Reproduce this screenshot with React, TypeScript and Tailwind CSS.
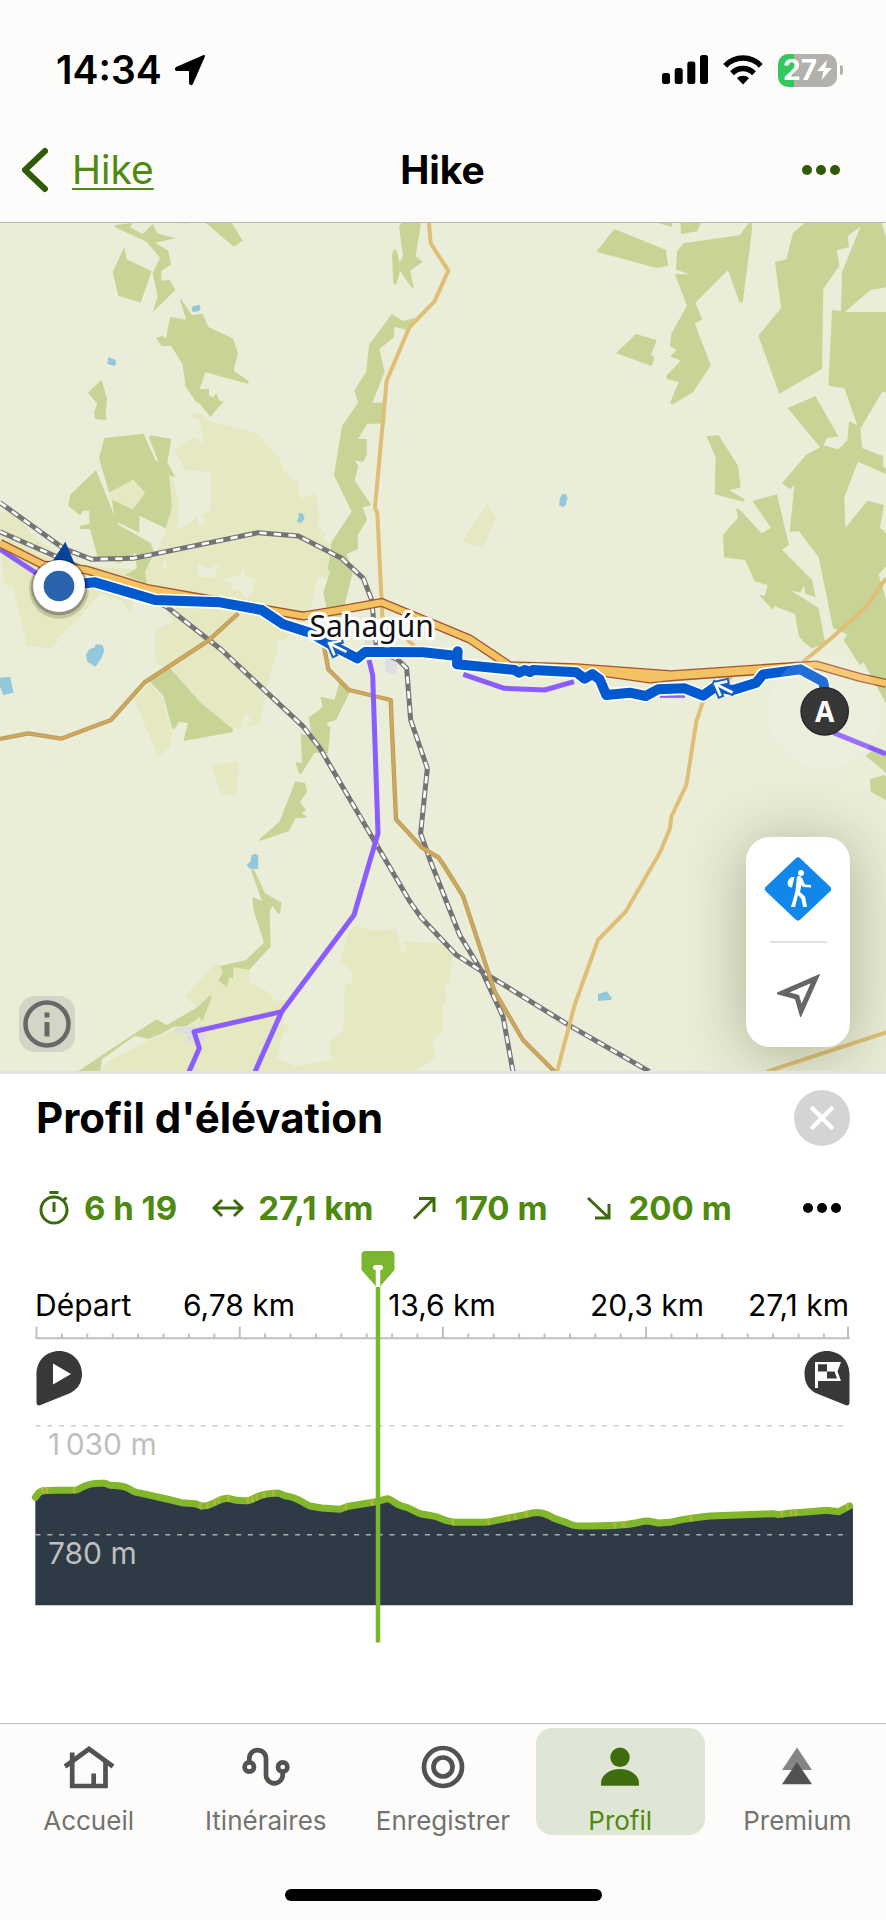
import type { ReactNode } from 'react';

const WOOD = '#c8d496';
const FARM = '#e5e8c0';
const WATER = '#93c8dc';
const TOWN = '#dddee0';

interface Shape {
  fill: string;
  d: string;
}

// Land cover polygons, split in four tiles of the map
const tiles: { x: number; y: number; shapes: Shape[] }[] = [
  {
    x: 0,
    y: 0,
    shapes: [
      { fill: FARM, d: 'M565 585L600 578L632 605L768 638L838 710L850 750L880 783L892 781L900 838L948 820L957 890L950 925L970 918L960 940L975 940L970 958L1025 995L1080 1060L1050 1075L985 1075L952 1072L930 1180L850 1262H465V1232L520 1205L500 1165L400 1120L395 1180L360 1140L300 1120L240 1190L170 1260L150 1285L80 1275L40 1100L12 1090L5 1010L0 980V877L40 880L75 915L100 950L200 1020L290 1040L440 1050L470 1000L500 925L515 850L505 760L515 770L538 850L530 933L590 892L600 920L618 905L603 885L632 870V755L555 750L523 690L585 652L612 680L600 600Z' },
      { fill: '#eaedd7', d: 'M592 1028L628 1045L660 1030L640 1075L595 1070ZM660 1080L718 1065L735 1038L732 1070L772 1078L755 1095L762 1110L740 1135L720 1110L695 1115L695 1090ZM485 1045L497 1010L500 1048Z' },
      { fill: WOOD, d: 'M345 15L398 9L390 22L428 42L458 12L472 40L527 55L465 68L505 92L513 134L484 152V182L509 179L526 210L459 276L473 227L458 160L480 113L440 65L345 22ZM373 82L380 118L455 154L422 248L355 227L338 155ZM548 9L560 9L550 11ZM618 9H695L728 62L701 80ZM542 236L576 285L607 281L626 322L698 355L714 398L701 452L747 484L743 491L616 457L599 507H627V527L640 532L649 519L658 543L671 544L631 591L597 548H590L555 497L556 490L547 432L514 378H485L468 355L486 347L498 355L510 291L559 299L540 240ZM304 479L321 535L317 582L320 601L285 597L282 578L292 552L264 518Z' },
      { fill: WOOD, d: 'M313 654L431 641L466 720L476 725L447 655L450 646L514 656L502 728L527 773L507 765L516 862L497 925L418 887V938L345 902L335 838L398 868L435 818L400 780L327 818L297 714ZM288 750L343 887L356 915L452 968L463 1000L435 1055L440 1090L375 1065L410 1045L407 1000L360 1030L293 1010L270 928L239 926V918L268 911V872L250 872L240 886L205 858L210 825Z' },
      { fill: WOOD, d: 'M1197 20L1205 9H1263L1247 108L1268 126L1230 152L1241 200L1236 205L1200 152L1189 195L1180 192L1176 105L1182 88L1190 92L1199 128L1209 107ZM1175 283L1210 303L1247 293L1222 330L1183 320L1182 352L1138 387L1154 455L1117 548H1156V610L1101 612L1074 657H1100V705L1090 725L1064 722L1075 738L1064 782L1114 855L1088 862L1101 900L1073 945L1074 988L1040 1002L1057 1060L1035 1150L1030 1190H985L970 1118L990 1055L983 1048L990 1005L995 965L1055 875L1002 766L1026 618L1074 548L1063 511L1098 457L1107 375Z' },
      { fill: WATER, d: 'M578 259L598 254L602 266L596 274L578 276L575 266ZM325 411L347 420L348 432L343 438L322 431ZM895 880H908L914 894L904 910L890 904L897 892ZM268 1288L285 1282L287 1273L307 1275L313 1290L306 1312L287 1340L262 1325L258 1304Z' },
      { fill: TOWN, d: 'M1100 1215H1190V1295H1092Z' },
    ],
  },
  {
    x: 1329,
    y: 0,
    shapes: [
      { fill: WOOD, d: 'M514 27L668 89L676 137L641 144L460 95ZM645 9H687V21ZM712 9H774L762 34L714 42ZM918 9H928L926 40L899 248H890L855 150L757 248L778 299L755 310L803 436L750 517L687 554L682 547L707 486L673 478L669 469L713 422L681 408L701 391L681 378L685 341L732 257L696 163H741L699 149L702 94L722 70L889 46ZM579 342L641 360L624 405L635 410L626 438L519 400Z' },
      { fill: WOOD, d: 'M1085 9H1260L1252 20L1214 47L1218 81L1182 91L1189 138L1141 206L1137 447L1009 521L946 347L1014 264L996 126L1030 118L1050 38ZM1257 9H1315L1329 50V202L1282 210L1206 276H1329V517H1317L1252 626L1258 685L1320 708V740L1329 745V762L1245 725L1204 831L1207 924L1273 842L1323 855L1311 923L1329 940V1040L1307 1063L1329 1140V1260V1450L1262 1327L1250 1335L1201 1259L1214 1245L1186 1230L1170 1224L1127 1012L1068 934L1040 936L1054 796L1041 808L1017 790L1089 705L1131 682L1034 564L1117 528L1187 650L1152 654L1141 676L1186 688L1213 660L1218 604L1243 616L1204 504L1156 497L1167 270L1194 273L1197 156Z' },
      { fill: WOOD, d: 'M790 648L827 646L885 737L893 802L859 811L905 838L903 845L815 823L818 712ZM879 866H888L956 940L984 923L928 843L1002 823L1038 975L1017 989L1108 1081L1118 1132L1086 1121L1084 1095L1072 1118L1043 1111L1126 1163L1147 1270L1107 1285L1068 1251L1056 1182L994 1158L990 1170L952 1130V1124L965 1128L974 1095L935 1084L907 1021L843 1012L840 944L885 893Z' },
      { fill: FARM, d: 'M134 852L159 895L120 982L57 965Z' },
      { fill: WATER, d: 'M357 822L369 823L374 834L368 855L361 861L348 856L351 833Z' },
    ],
  },
  {
    x: 0,
    y: 1260,
    shapes: [
      { fill: FARM, d: 'M80 0H178L147 26L80 12ZM465 0H830L833 32L800 140L780 250L740 260L752 237L735 218L722 268L700 265L560 160L510 85L467 70ZM403 180L450 128L490 180L515 285L511 318L475 352ZM632 374L717 364L709 464L666 466ZM645 972L750 990L745 1025L795 1050L830 1085L860 1080L850 1150L870 1160L845 1190L830 1255L890 1280L1000 1260L988 1230L990 1205L1030 1175L1035 1030L1055 1035L1058 995L1020 965L1045 875L1065 858L1120 872L1188 868L1206 945L1222 925L1206 905L1329 912V1293H300L330 1262L470 1190L520 1170L595 1100L553 1072Z' },
      { fill: '#eaedd7', d: 'M1329 1172L1296 1205L1306 1250L1246 1293H1329Z' },
      { fill: WOOD, d: 'M510 85L602 188L700 268L697 277L550 303L564 250L538 245L524 266H517L490 168L448 123ZM1018 128L1050 155L1008 240L978 249L991 263L984 340L944 338L904 401L896 400L886 367L906 368L902 282L936 290L926 233L968 201L961 170L1003 180ZM886 424L916 430L921 456L900 485L918 510L905 520L918 527V533L886 535L867 573L780 603V596L838 545ZM752 688H762L795 760L845 788L840 820L834 821L818 797L809 812L812 920L748 989L700 982L699 1015L688 1012L680 1042L655 1020L668 1000L661 978L738 960L792 908L761 812L757 772L786 782ZM628 1068L636 1070L607 1144L598 1132L560 1158L520 1160L490 1178L447 1197L405 1187L306 1258L300 1293H235L405 1180L470 1138L500 1155L590 1103Z' },
      { fill: WATER, d: 'M0 113L30 110L41 158L10 165L0 140ZM765 641L775 646L774 687L750 686L740 676L752 664L755 646Z' },
      { fill: TOWN, d: 'M1155 50H1195L1188 103L1155 95ZM515 1175L540 1163L615 1155L620 1180L605 1210L562 1205V1182Z' },
    ],
  },
  {
    x: 1329,
    y: 1260,
    shapes: [
      { fill: FARM, d: 'M0 910L28 945L20 1025L5 1035L12 1090L0 1095Z' },
      { fill: WOOD, d: 'M1075 0H1160L1107 25ZM1268 348L1290 330L1329 345V398ZM1281 418L1325 405L1329 410V480L1283 455Z' },
      { fill: WATER, d: 'M465 1062L491 1054L507 1075L504 1080L465 1083Z' },
    ],
  },
];

const lightRoads = [
  'M1287 9L1292 70L1345 152L1303 245L1228 322L1160 482L1125 862L1132 880L1147 1190L1243 1278',
  'M2194 1370L2109 1445L2089 1505L2059 1695L2014 1790L2010 1825L1981 1895L1877 2075L1794 2160L1724 2355L1671 2555',
  'M2658 1075L2599 1160L2499 1250L2410 1325',
  'M2300 2555L2658 2437',
];

const darkRoads = [
  'M0 1557L85 1540L183 1556L333 1500L433 1388L625 1262L715 1180',
  'M965 1240L985 1348L1047 1410L1172 1440L1188 1798L1265 1882L1315 1912L1329 1932L1389 2028L1484 2315L1569 2460L1664 2555',
];

const railways = [
  'M0 848L190 985L275 1018L400 1015L775 938L895 948L1025 1015L1090 1075L1115 1140L1130 1290L1195 1320L1220 1345L1232 1500L1282 1645L1262 1840L1290 1920L1379 2145L1449 2260L1509 2390L1539 2555',
  'M0 935L170 1010L500 1160L665 1290L910 1520L960 1585L1230 2045L1265 2095L1369 2205L1439 2250L1714 2420L1949 2555',
];

const trails = [
  'M0 988L110 1060',
  'M1107 1320L1118 1365L1134 1840L1062 2085L845 2375L582 2435L598 2485L567 2555',
  'M845 2375L765 2555',
  'M1390 1363L1513 1405L1634 1410L1722 1385',
  'M1980 1426H2055',
  'M2500 1538L2658 1602',
];

const highways = [
  'M1770 1352L1950 1377L2020 1370L2270 1352',
  'M0 970L130 1035L260 1050L440 1105L620 1137L780 1165L910 1188L1020 1170L1145 1147L1409 1257L1529 1337L1729 1343L2014 1364L2449 1335L2579 1372L2658 1390',
];

const route =
  'M177 1098L285 1087L465 1140L660 1147L785 1170L850 1213L930 1238L1000 1278L1072 1315L1095 1296L1150 1296L1270 1297L1372 1308L1373 1294L1371 1333L1544 1350L1557 1358L1574 1350L1590 1356L1599 1350L1729 1357L1754 1376L1777 1362L1799 1378L1819 1425L1889 1418L1937 1428L1974 1408L2054 1405L2109 1427L2144 1402L2199 1410L2269 1388L2289 1363L2401 1348L2469 1385L2477 1420';

const arrows = [
  { x: 988, y: 1270 },
  { x: 2146, y: 1392 },
];

const elevation =
  'M106 292L115 280C125 268 140 272 230 270C275 245 295 250 315 250L330 256C360 256 370 258 385 265C400 275 410 279 425 280L500 297L545 308L585 311L605 318C640 320 650 295 685 295C700 300 715 304 745 302C765 298 770 280 835 279L855 287C900 293 905 309 930 318L965 324L1020 328L1045 319L1120 307L1163 296C1180 300 1185 312 1205 318C1240 325 1240 337 1265 342L1310 350L1340 362L1365 367L1450 367L1470 365L1530 353L1580 343C1620 330 1640 343 1665 356L1700 368C1725 380 1730 378 1765 378C1870 378 1890 373 1930 364L1945 363L1975 369L2010 367C2060 353 2070 356 2130 348L2320 341L2335 344L2365 340L2430 335L2480 331L2517 335L2549 318';

const steepBits = [
  [132, 271], [145, 271], [226, 270], [605, 318], [627, 316], [648, 306], [660, 300],
  [690, 295], [748, 301], [762, 298], [775, 292], [796, 284], [824, 280], [1042, 320],
  [1120, 307], [1363, 367], [1470, 365], [1530, 354], [1550, 350], [1584, 342], [1848, 375],
  [1876, 373], [2078, 354], [2350, 342], [2378, 339], [2392, 338], [2546, 319],
];

const distances: { x: number; label: string; anchor: 'start' | 'middle' | 'end' }[] = [
  { x: 35, label: 'Départ', anchor: 'start' },
  { x: 239, label: '6,78 km', anchor: 'middle' },
  { x: 442, label: '13,6 km', anchor: 'middle' },
  { x: 647, label: '20,3 km', anchor: 'middle' },
  { x: 849, label: '27,1 km', anchor: 'end' },
];

function StatusBar() {
  return (
    <div className="flex h-[120px] items-center justify-between pt-5 pr-[43px] pl-14">
      <div className="flex items-center gap-3">
        <span className="text-[39px] leading-12 font-semibold">14:34</span>
        <svg viewBox="0 0 32 32" className="h-8 w-8" aria-hidden="true">
          <path
            d="M30 2L18 29.500Q16.500 31 16 29V17.500Q16 16 14.500 16H3Q1 15.500 2.500 14Z"
            fill="black"
            stroke="black"
            strokeWidth="2"
            strokeLinejoin="round"
          />
        </svg>
      </div>
      <div className="flex items-center gap-[15px]">
        <svg viewBox="0 0 46 30" className="h-[30px] w-[46px]" aria-hidden="true">
          <rect x="0" y="18" width="8" height="11" rx="2.500" />
          <rect x="12.700" y="13" width="8" height="16" rx="2.500" />
          <rect x="25.300" y="6.500" width="8" height="22.500" rx="2.500" />
          <rect x="38" y="0" width="8" height="29" rx="2.500" />
        </svg>
        <svg viewBox="0 0 40 30" className="h-[30px] w-10" aria-hidden="true">
          <path d="M2.200 10.800C12 .500 28 .500 37.800 10.800" fill="none" stroke="black" strokeWidth="5.500" />
          <path d="M9 18.200C15.500 12 24.500 12 31 18.200" fill="none" stroke="black" strokeWidth="5.500" />
          <path d="M20 29.500L14 23.200C17.500 20 22.500 20 26 23.200Z" />
        </svg>
        <div className="flex items-center gap-[3px]">
          <div className="flex h-[33px] w-[59px] items-center justify-center rounded-[10px] bg-linear-to-r from-[#34c759] from-27% to-[#b2b1ae] to-27%">
            <span className="text-[28px] leading-8 font-bold text-white">27</span>
            <svg viewBox="0 0 15 20" className="h-5 w-[15px]" aria-hidden="true">
              <path d="M10 0L0 11H6.500L4.500 20L15 8H8.500Z" fill="white" />
            </svg>
          </div>
          <span className="h-[10px] w-[3px] rounded-r-full bg-[#b2b1ae]" />
        </div>
      </div>
    </div>
  );
}

function HikeMap() {
  return (
    <svg viewBox="0 9 2658 2544" className="block h-auto w-full bg-[#eaedd7]" role="img" aria-label="Sahagún">
      {tiles.map((tile) => (
        <g key={`${tile.x}-${tile.y}`} transform={`translate(${tile.x} ${tile.y})`}>
          {tile.shapes.map((shape) => (
            <path key={shape.d} d={shape.d} fill={shape.fill} />
          ))}
        </g>
      ))}
      <path d="M327 818L400 780L435 818L398 868L335 838Z" fill={FARM} />

      <g fill="none" strokeLinejoin="round">
        {railways.map((d) => (
          <g key={d}>
            <path d={d} stroke="#747474" strokeWidth="15" />
            <path d={d} stroke="white" strokeWidth="8" strokeDasharray="22 22" />
          </g>
        ))}
        {lightRoads.map((d) => (
          <path key={d} d={d} stroke="#dfbf76" strokeWidth="12" />
        ))}
        {darkRoads.map((d) => (
          <g key={d}>
            <path d={d} stroke="#b59a5e" strokeWidth="13" />
            <path d={d} stroke="#d1a85a" strokeWidth="8" />
          </g>
        ))}
        {trails.map((d) => (
          <path key={d} d={d} stroke="#8b5cff" strokeWidth="15" />
        ))}
        {highways.map((d) => (
          <path key={d} d={d} stroke="#a4552c" strokeWidth="27" />
        ))}
        {highways.map((d) => (
          <path key={d} d={d} stroke="#f3c263" strokeWidth="19" />
        ))}
        <path d={route} stroke="white" strokeWidth="40" />
        <path d={route} stroke="#0059cf" strokeWidth="30" />
        {arrows.map((arrow) => (
          <g key={arrow.x} transform={`translate(${arrow.x} ${arrow.y})`} strokeLinecap="square">
            <path d="M0 0L48 24M32 -7L0 0L14 32" stroke="#1461c4" strokeWidth="20" />
            <path d="M0 0L48 24M32 -7L0 0L14 32" stroke="white" strokeWidth="8" strokeLinejoin="miter" />
          </g>
        ))}
      </g>

      <text
        x="1115"
        y="1252"
        textAnchor="middle"
        className="fill-[#111] stroke-white font-['Noto_Sans',sans-serif] text-[90px]"
        strokeWidth="20"
        strokeLinejoin="round"
        paintOrder="stroke"
      >
        Sahagún
      </text>

      <path d="M196 965L152 1032H224Z" fill="#06449b" />
      <circle cx="177" cy="1106" r="90" fill="black" opacity="0.150" />
      <circle cx="177" cy="1102" r="84" fill="black" opacity="0.250" />
      <circle cx="177" cy="1098" r="78" fill="white" />
      <circle cx="177" cy="1098" r="46" fill="#2962ad" />

      <circle cx="2474" cy="1474" r="170" fill="white" opacity="0.130" />
      <circle cx="2474" cy="1474" r="71" fill="#373737" stroke="#2a202c" strokeWidth="4" />
      <text
        x="2474"
        y="1505"
        textAnchor="middle"
        className="fill-white font-['Noto_Sans',sans-serif] text-[84px] font-bold"
      >
        A
      </text>
    </svg>
  );
}

function MapControls() {
  return (
    <div className="absolute right-9 bottom-6 flex w-[104px] flex-col items-center rounded-3xl bg-white shadow-[0_6px_60px_rgba(60,60,20,0.35)]">
      <button type="button" aria-label="Type de carte" className="flex h-[104px] w-full items-center justify-center">
        <svg viewBox="-34 -32 68 64" className="h-16 w-[68px]" aria-hidden="true">
          <path d="M0 -28L29.500 0L0 28L-29.500 0Z" fill="#1187ea" stroke="#1187ea" strokeWidth="7" strokeLinejoin="round" />
          <circle cx="3" cy="-16" r="3" fill="white" />
          <path
            d="M-1 -12.500L2 -13L4 -11L7 -4.500L13 -4V-1.500L5 -2L3.500 -4L2 3L7 7.500L9 18H5L3.500 10L0 6L-3 18H-7L-2.500 2Z"
            fill="white"
          />
          <path d="M-3.500 -12L-6 -1.500C-10 -1.500 -11 -5 -10 -8C-9 -11 -6.500 -12.500 -3.500 -12Z" fill="white" />
        </svg>
      </button>
      <span className="h-[2px] w-[57px] bg-[#e0e0e0]" />
      <button type="button" aria-label="Ma position" className="flex h-[104px] w-full items-center justify-center">
        <svg viewBox="0 0 43 43" className="h-[43px] w-[43px]" aria-hidden="true">
          <path d="M38.500 4.500L5 19L20 23L24 37Z" fill="none" stroke="#666" strokeWidth="5" />
        </svg>
      </button>
    </div>
  );
}

function Dots({ className }: { className: string }) {
  return (
    <svg viewBox="0 0 40 12" className={className} aria-hidden="true">
      <circle cx="6" cy="6" r="5" />
      <circle cx="20" cy="6" r="5" />
      <circle cx="34" cy="6" r="5" />
    </svg>
  );
}

function Stat({ label, children }: { label: string; children: ReactNode }) {
  return (
    <div className="flex items-center gap-3">
      <svg viewBox="-18 -18 36 36" className="h-9 w-9 fill-none stroke-[#3d6b0c]" strokeWidth="3" aria-hidden="true">
        {children}
      </svg>
      <span className="text-[33px] leading-10 font-bold text-[#4f8a10]">{label}</span>
    </div>
  );
}

function ElevationChart() {
  const ticks = Array.from({ length: 33 }, (_, i) => i);

  return (
    <svg
      viewBox="0 0 886 410"
      className="block h-auto w-full font-[Inter,sans-serif] text-[30px]"
      role="img"
      aria-label="Profil d'élévation"
    >
      {distances.map((distance) => (
        <text key={distance.label} x={distance.x} y="76" textAnchor={distance.anchor}>
          {distance.label}
        </text>
      ))}
      <path d="M35.500 98.300H850" stroke="#bfbfbf" strokeWidth="2" />
      {ticks.map((i) => {
        const x = Math.min(36.5 + i * 25.4, 848);
        return (
          <path key={i} d={`M${x} ${i % 8 === 0 ? 86.7 : 93.5}V98`} stroke="#bfbfbf" strokeWidth="2" />
        );
      })}

      <path
        d="M36.500 134C36.500 120 47 111 59 111C72 111 82 121 82 134C82 144 76 151 68 154L40 165.300Q36.500 166 36.500 163Z"
        fill="#383838"
      />
      <path d="M53 123.500V144.500L71 134Z" fill="white" />
      <path
        d="M849.500 134C849.500 120 839 111 827 111C814 111 804.500 121 804.500 134C804.500 144 810 151 818 154L846 165.300Q849.500 166 849.500 163Z"
        fill="#383838"
      />
      <path d="M815 122H841L837.500 131.500L841 141H818V148H815Z" fill="white" />
      <path d="M818 124.300H827V131.500H818ZM827 131.500H834.500L837 138.500H827Z" fill="#383838" />

      <path d="M35.500 185.700H845" stroke="#ccc" strokeWidth="1.500" strokeDasharray="5 6.800" />
      <g transform="translate(0 160) scale(0.3333)">
        <path d={`${elevation}L2559 325V616H106Z`} fill="#2e3a46" />
        <path d={elevation} fill="none" stroke="#82b72c" strokeWidth="21" strokeLinecap="round" strokeLinejoin="round" />
        {steepBits.map(([x, y]) => (
          <path
            key={x}
            d={`M${x - 2} ${y - 9}Q${x - 9} ${y} ${x - 1} ${y + 9}`}
            fill="none"
            stroke="#b0b83c"
            strokeWidth="7"
          />
        ))}
      </g>
      <path d="M35.500 294.700H845" stroke="#a9adb0" strokeWidth="1.500" strokeDasharray="5 6.800" />
      <text x="48" y="215" className="fill-[#bfbfbf]">
        {'1\u2009030 m'}
      </text>
      <text x="48" y="324" className="fill-[#bfbfbf]">
        780 m
      </text>

      <path d="M378 40V402.500" stroke="#7ab72e" strokeWidth="4.500" />
      <path d="M365.500 11H390.500Q394.500 11 394.500 15V30L380 46.500H376L361.500 30V15Q361.500 11 365.500 11Z" fill="#7ab72e" />
      <path d="M378 27V47" stroke="white" strokeWidth="4.500" />
      <path d="M375.500 27.500H380.500" stroke="white" strokeWidth="5" strokeLinecap="round" />
    </svg>
  );
}

const tabs: { label: string; active?: boolean; icon: ReactNode }[] = [
  {
    label: 'Accueil',
    icon: (
      <g fill="none" stroke="#525250" strokeWidth="4.700">
        <path d="M-24 -.500L0 -18L24 -.500" />
        <path d="M-16.800 -14.500V19H16.500V-5M4.700 6.500V19" />
      </g>
    ),
  },
  {
    label: 'Itinéraires',
    icon: (
      <g fill="none" stroke="#525250" strokeWidth="4.700">
        <circle cx="-16.700" cy="0" r="4.700" />
        <circle cx="16.700" cy="0" r="4.700" />
        <path d="M-16.700 -5V-8.600A8.350 8.350 0 0 1 0 -8.600V8A8.350 8.350 0 0 0 16.700 8V5" />
      </g>
    ),
  },
  {
    label: 'Enregistrer',
    icon: (
      <g fill="none" stroke="#525250" strokeWidth="4.700">
        <circle r="19" />
        <circle r="9.500" />
      </g>
    ),
  },
  {
    label: 'Profil',
    active: true,
    icon: (
      <g fill="#3f6d0d">
        <circle cy="-9.700" r="9.700" />
        <path d="M-19 18.700V16C-19 8 -10 2 0 2S19 8 19 16V18.700Z" />
      </g>
    ),
  },
  {
    label: 'Premium',
    icon: (
      <g>
        <path d="M0 -19.500L15 3H-15Z" fill="#858583" />
        <path d="M0 -5L15 17.300H-15Z" fill="#525250" />
      </g>
    ),
  },
];

function TabBar() {
  return (
    <nav className="border-t border-[#bdbdbb] bg-[#fdfcfa] pt-1 pb-[19px]">
      <div className="grid grid-cols-5">
        {tabs.map((tab) => (
          <a
            key={tab.label}
            href="#"
            className={`mx-1 flex h-[107px] flex-col items-center rounded-2xl pt-[17px] ${
              tab.active ? 'bg-[#dfe6d6] text-[#4f8a10]' : 'text-[#737371]'
            }`}
          >
            <svg viewBox="-26 -22 52 44" className="h-11 w-[52px]" aria-hidden="true">
              {tab.icon}
            </svg>
            <span className="mt-[18px] text-[26px] leading-7">{tab.label}</span>
          </a>
        ))}
      </div>
      <div className="mx-auto mt-[54px] h-3 w-[317px] rounded-full bg-black" />
    </nav>
  );
}

export default function App() {
  return (
    <div className="flex min-h-screen flex-col bg-white font-[Inter,sans-serif] text-black">
      <header className="border-b border-[#b9b9b4] bg-[#fdfcfa]">
        <StatusBar />
        <div className="grid h-[102px] grid-cols-3 items-center pr-[45px] pb-[2px] pl-5">
          <a href="#" className="flex items-center gap-6 text-[39px] leading-12 text-[#4f8a10]">
            <svg viewBox="0 0 28 46" className="h-[46px] w-7" aria-hidden="true">
              <path
                d="M25 4L5 23L25 42"
                fill="none"
                stroke="#2f5a08"
                strokeWidth="6"
                strokeLinecap="round"
                strokeLinejoin="round"
              />
            </svg>
            <span className="underline decoration-2 underline-offset-4">Hike</span>
          </a>
          <h1 className="pl-6 text-center text-[39px] leading-12 font-bold">Hike</h1>
          <button type="button" aria-label="Plus d'options" className="justify-self-end">
            <Dots className="h-3 w-10 fill-[#2f5a08]" />
          </button>
        </div>
      </header>

      <div className="relative overflow-hidden border-b-3 border-[#e3e3e6]">
        <HikeMap />
        <button
          type="button"
          aria-label="Informations"
          className="absolute bottom-[19px] left-[19px] flex h-14 w-14 items-center justify-center rounded-2xl bg-[#d3d6c6]"
        >
          <svg viewBox="0 0 48 48" className="h-12 w-12" aria-hidden="true">
            <circle cx="24" cy="24" r="21.500" fill="none" stroke="#686868" strokeWidth="4.500" />
            <path d="M24 12.500V17.500M24 22V36.500" stroke="#686868" strokeWidth="5" />
          </svg>
        </button>
        <MapControls />
      </div>

      <section className="grow pt-4 pb-[73px]">
        <div className="flex h-14 items-center justify-between pr-9 pl-9">
          <h2 className="text-[42px] leading-12 font-bold">Profil d'élévation</h2>
          <button
            type="button"
            aria-label="Fermer"
            className="flex h-14 w-14 items-center justify-center rounded-full bg-[#d4d4d4]"
          >
            <svg viewBox="0 0 24 24" className="h-6 w-6" aria-hidden="true">
              <path d="M2.500 2.500L21.500 21.500M21.500 2.500L2.500 21.500" stroke="white" strokeWidth="4.500" strokeLinecap="round" />
            </svg>
          </button>
        </div>

        <div className="mt-[38px] flex h-12 items-center justify-between pr-11 pl-9">
          <div className="flex items-center gap-[33px]">
            <Stat label="6 h 19">
              <circle cx="0" cy="2" r="13" />
              <path d="M-4.500 -15.500H4.500M0 -6V4M9 -7L12.500 -10.500" />
            </Stat>
            <Stat label="27,1 km">
              <path d="M-13 0H13M-6 -8L-14 0L-6 8M6 -8L14 0L6 8" />
            </Stat>
            <Stat label="170 m">
              <path d="M-10 10.500L10 -9.500M-5 -9.500H10V4" />
            </Stat>
            <Stat label="200 m">
              <path d="M-11 -10L10 10M-4 10H10V-4" />
            </Stat>
          </div>
          <button type="button" aria-label="Plus de statistiques">
            <Dots className="h-3 w-10 fill-black" />
          </button>
        </div>

        <div className="mt-2">
          <ElevationChart />
        </div>
      </section>

      <TabBar />
    </div>
  );
}
